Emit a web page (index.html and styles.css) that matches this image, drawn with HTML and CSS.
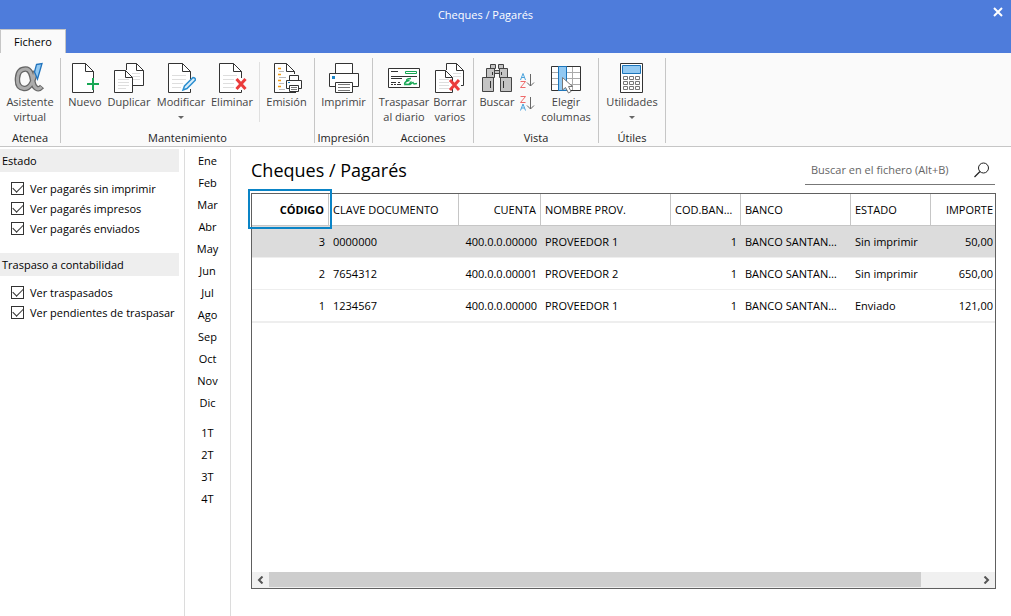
FILE: index.html
```html
<!DOCTYPE html>
<html lang="es">
<head>
<meta charset="utf-8">
<title>Cheques / Pagarés</title>
<link rel="stylesheet" href="styles.css">
</head>
<body>
<header class="titlebar">
  <h1 class="window-title">Cheques / Pagarés</h1>
  <button class="close" aria-label="Cerrar"><svg width="10" height="10" viewBox="0 0 10 10"><path d="M1 1l8 8M9 1l-8 8" stroke="#fff" stroke-width="2" fill="none"/></svg></button>
  <button class="tab">Fichero</button>
</header>

<nav class="ribbon">
  <section class="group g-atenea">
    <div class="tools">
      <button class="tool"><svg width="32" height="32" viewBox="0 0 32 32"><g fill="none"><path id="alpha" d="M21.500 9C20 17 17 27 10 26.500C5 26 3 22 3.500 16C4 10 7 7 11.500 7C17 7 18 14 19 20C20 26 24 29 28 24.500" stroke="#666" stroke-width="5.500"/><path d="M21.500 9C20 17 17 27 10 26.500C5 26 3 22 3.500 16C4 10 7 7 11.500 7C17 7 18 14 19 20C20 26 24 29 27.500 25" stroke="#acacac" stroke-width="3"/></g><path d="M22.500 2.500L28 1.500L23.500 17L20.500 10Z" fill="#92c9f2" stroke="#2274bd" stroke-width="1.300"/></svg><span>Asistente<br>virtual</span></button>
    </div>
    <h2>Atenea</h2>
  </section>

  <section class="group g-mant">
    <div class="tools">
      <button class="tool"><svg width="30" height="32" viewBox="0 0 30 32"><path d="M23.500 19V9.500L15.500 1.500H2.500V30.500H23.500V28" fill="#fff" stroke="#333"/><path d="M15.500 1.500V9.500H23.500Z" fill="#fff" stroke="#333"/><path d="M23 16V28M17 22H29" stroke="#17a754" stroke-width="2"/></svg><span>Nuevo</span></button>
      <button class="tool"><svg width="30" height="32" viewBox="0 0 30 32"><path d="M12.500 8V1.500H22.500L29.500 8.500V23.500H19" fill="#fff" stroke="#333"/><path d="M22.500 1.500V8.500H29.500" fill="none" stroke="#333"/><path d="M18 11.500h8M18 14.500h8M19 17.500h7" stroke="#dedede"/><path d="M.500 8.500H11.500L18.500 15.500V30.500H.500Z" fill="#fff" stroke="#333"/><path d="M11.500 8.500V15.500H18.500" fill="none" stroke="#333"/><path d="M4 17.500h11M4 20.500h11M4 23.500h11M4 26.500h8" stroke="#dedede"/></svg><span>Duplicar</span></button>
      <button class="tool"><svg width="30" height="32" viewBox="0 0 30 32"><path d="M24.500 17V9.500L16.500 1.500H2.500V30.500H24.500V27" fill="#fff" stroke="#333"/><path d="M16.500 1.500V9.500H24.500" fill="none" stroke="#333"/><path d="M6 13.500h14M6 17.500h14M6 21.500h11M6 25.500h9" stroke="#dedede"/><path d="M17 28L18.500 24L27 15.500Q29.500 15.500 29.500 18L21 26.500Z" fill="#d9eefb" stroke="#2c8fd0" stroke-width="1.500"/></svg><span>Modificar</span><i class="arrow"></i></button>
      <button class="tool"><svg width="30" height="32" viewBox="0 0 30 32"><path d="M24.500 16V9.500L16.500 1.500H2.500V30.500H24.500V28" fill="#fff" stroke="#333"/><path d="M16.500 1.500V9.500H24.500" fill="none" stroke="#333"/><path d="M6 13.500h14M6 17.500h11M6 21.500h11M6 25.500h11" stroke="#dedede"/><path d="M19.500 17L28.500 27M28.500 17L19.500 27" stroke="#eb3b3b" stroke-width="3"/></svg><span>Eliminar</span></button>
      <span class="divider"></span>
      <button class="tool"><svg width="30" height="32" viewBox="0 0 30 32"><path d="M22.500 12V9.500L14.500 1.500H2.500V30.500H24" fill="#fff" stroke="#333"/><path d="M14.500 1.500V9.500H22.500" fill="none" stroke="#333"/><path d="M6 6.500h3M6 12.500h3M6 18.500h3M6 24.500h3" stroke="#f39c12" stroke-width="1.500"/><path d="M7 9.500h5M7 15.500h7M7 21.500h5M7 27.500h6" stroke="#bbb"/><path d="M17.500 19V13.500H26.500V19" fill="#fff" stroke="#333"/><path d="M14.500 18.500H29.500V26.500H14.500Z" fill="#fff" stroke="#333"/><path d="M17.500 23.500H26.500V29.500H17.500Z" fill="#fff" stroke="#333"/><path d="M19 25.500h6M19 27.500h6" stroke="#777"/><path d="M16 20.500h2" stroke="#1b86c8"/></svg><span>Emisión</span></button>
    </div>
    <h2>Mantenimiento</h2>
  </section>

  <section class="group g-imp">
    <div class="tools">
      <button class="tool"><svg width="30" height="32" viewBox="0 0 30 32"><path d="M6.500 12V1.500H23.500V12" fill="#fff" stroke="#333"/><path d="M.500 11.500H29.500V24.500H.500Z" fill="#fff" stroke="#333"/><path d="M6.500 20.500H23.500V30.500H6.500Z" fill="#fff" stroke="#333"/><path d="M9 22.500h12M9 25.500h12M9 28.500h12" stroke="#777"/><path d="M3 14h3v3H3z" fill="#1b86c8"/></svg><span>Imprimir</span></button>
    </div>
    <h2>Impresión</h2>
  </section>

  <section class="group g-acc">
    <div class="tools">
      <button class="tool"><svg width="32" height="32" viewBox="0 0 32 32"><path d="M.500 6.500H31.500V25.500H.500Z" fill="#fff" stroke="#333"/><path d="M3 9.500h7M3 14.500h26M3 16.500h11M3 20.500h5M10 20.500h2M3 22.500h2M6 22.500h2M9 22.500h4" stroke="#333"/><path d="M17.500 9.500h11v2h-11z" fill="#fff" stroke="#17a754"/><path d="M23 16.500Q18 16.500 18.500 18.500H21.500Q16.500 19.500 16.500 22L20.500 22.500L23.500 19.500M16 22.500H22L25 20.500L26 22L29 21.500" fill="none" stroke="#17a754" stroke-width="1.300"/></svg><span>Traspasar<br>al diario</span></button>
      <button class="tool"><svg width="30" height="32" viewBox="0 0 30 32"><path d="M11.500 8V1.500H21.500L28.500 8.500V23.500H26" fill="#fff" stroke="#333"/><path d="M21.500 1.500V8.500H28.500" fill="none" stroke="#333"/><path d="M18 11.500h8M18 14.500h8" stroke="#dedede"/><path d="M17.500 19V15.500L10.500 8.500H.500V30.500H17.500V27" fill="#fff" stroke="#333"/><path d="M10.500 8.500V15.500H17.500" fill="none" stroke="#333"/><path d="M4 17.500h10M4 20.500h10M4 23.500h10M4 26.500h10" stroke="#dedede"/><path d="M15 18L24 28M24 18L15 28" stroke="#eb3b3b" stroke-width="3"/></svg><span>Borrar<br>varios</span></button>
    </div>
    <h2>Acciones</h2>
  </section>

  <section class="group g-vista">
    <div class="tools">
      <button class="tool"><svg width="30" height="32" viewBox="0 0 30 32"><path d="M8.500 2.500h5v4h-5zM16.500 2.500h5v4h-5zM4.500 6.500h8v9h-8zM17.500 6.500h8v9h-8zM12.500 8.500h5v3h-5zM.500 15.500h11v14H.500zM18.500 15.500h11v14h-11z" fill="#c4c4c4" stroke="#444"/><path d="M8.500 19v7M21.500 19v7M10.500 10v3M19.500 10v3" stroke="#333"/></svg><span>Buscar</span></button>
      <div class="sorts">
        <button aria-label="Orden ascendente"><svg width="15" height="17" viewBox="0 0 15 17"><path d="M.500 8L3 1.500L5.500 8M1.500 5.500h3" stroke="#4ba3dc" fill="none"/><path d="M.500 9.500h5l-5 6h5" stroke="#ee6a6a" fill="none"/><path d="M10.500 2v12M7 10.500L10.500 14L14 10.500" stroke="#666" fill="none"/></svg></button>
        <button aria-label="Orden descendente"><svg width="15" height="17" viewBox="0 0 15 17"><path d="M.500 1.500h5l-5 6h5" stroke="#ee6a6a" fill="none"/><path d="M.500 15.500L3 9L5.500 15.500M1.500 13h3" stroke="#4ba3dc" fill="none"/><path d="M10.500 2v12M7 10.500L10.500 14L14 10.500" stroke="#666" fill="none"/></svg></button>
      </div>
      <button class="tool"><svg width="30" height="32" viewBox="0 0 30 32"><path d="M.500 4.500h29v24H.500z" fill="#fff" stroke="#333"/><path d="M1 10.500h28M1 16.500h28M1 22.500h28M21.500 5v23" stroke="#aaa"/><path d="M7.500 4.500h8v24h-8z" fill="#92c9f2" stroke="#1b75bb"/><path d="M11.500 15.500V28L14.500 25.500L17.500 31L20 29.500L17.500 24.500H21.500Z" fill="#fff" stroke="#777"/></svg><span>Elegir<br>columnas</span></button>
    </div>
    <h2>Vista</h2>
  </section>

  <section class="group g-utiles">
    <div class="tools">
      <button class="tool"><svg width="24" height="32" viewBox="0 0 24 32"><path d="M.500 1.500h22v29h-22z" fill="#fff" stroke="#333"/><path d="M2.500 3.500h18v8h-18z" fill="#92c9f2" stroke="#1b75bb"/><path d="M3.500 14.500h4v3h-4zM9.500 14.500h4v3h-4zM15.500 14.500h4v3h-4zM3.500 19.500h4v3h-4zM9.500 19.500h4v3h-4zM15.500 19.500h4v3h-4zM3.500 24.500h4v3h-4zM9.500 24.500h4v3h-4zM15.500 24.500h4v3h-4z" fill="#fff" stroke="#777"/></svg><span>Utilidades</span><i class="arrow"></i></button>
    </div>
    <h2>Útiles</h2>
  </section>
</nav>

<div class="body">
  <aside class="filters">
    <h2>Estado</h2>
    <div class="checks">
      <label><input type="checkbox" checked>Ver pagarés sin imprimir</label>
      <label><input type="checkbox" checked>Ver pagarés impresos</label>
      <label><input type="checkbox" checked>Ver pagarés enviados</label>
    </div>
    <h2>Traspaso a contabilidad</h2>
    <div class="checks">
      <label><input type="checkbox" checked>Ver traspasados</label>
      <label><input type="checkbox" checked>Ver pendientes de traspasar</label>
    </div>
  </aside>

  <nav class="periods">
    <div class="period-list">
      <button>Ene</button><button>Feb</button><button>Mar</button><button>Abr</button><button>May</button><button>Jun</button><button>Jul</button><button>Ago</button><button>Sep</button><button>Oct</button><button>Nov</button><button>Dic</button>
    </div>
    <div class="period-list">
      <button>1T</button><button>2T</button><button>3T</button><button>4T</button>
    </div>
  </nav>

  <main class="content">
    <div class="content-head">
      <h2>Cheques / Pagarés</h2>
      <div class="search">
        <input type="text" placeholder="Buscar en el fichero (Alt+B)" aria-label="Buscar en el fichero">
        <button aria-label="Buscar"><svg width="16" height="16" viewBox="0 0 16 16"><circle cx="9.500" cy="6" r="5" fill="none" stroke="#222"/><path d="M6 9.500L.500 15" stroke="#222" stroke-width="1.200"/></svg></button>
      </div>
    </div>
    <div class="grid">
      <table>
        <colgroup><col class="c-cod"><col class="c-doc"><col class="c-cta"><col class="c-nom"><col class="c-cban"><col class="c-ban"><col class="c-est"><col></colgroup>
        <thead>
          <tr><th class="num sorted">CÓDIGO</th><th>CLAVE DOCUMENTO</th><th class="num">CUENTA</th><th>NOMBRE PROV.</th><th>COD.BANCO</th><th>BANCO</th><th>ESTADO</th><th class="num">IMPORTE</th></tr>
        </thead>
        <tbody>
          <tr class="selected"><td class="num">3</td><td>0000000</td><td class="num">400.0.0.00000</td><td>PROVEEDOR 1</td><td class="num">1</td><td class="bank">BANCO SANTANDER</td><td>Sin imprimir</td><td class="num">50,00</td></tr>
          <tr><td class="num">2</td><td>7654312</td><td class="num">400.0.0.00001</td><td>PROVEEDOR 2</td><td class="num">1</td><td class="bank">BANCO SANTANDER</td><td>Sin imprimir</td><td class="num">650,00</td></tr>
          <tr><td class="num">1</td><td>1234567</td><td class="num">400.0.0.00000</td><td>PROVEEDOR 1</td><td class="num">1</td><td class="bank">BANCO SANTANDER</td><td>Enviado</td><td class="num">121,00</td></tr>
        </tbody>
      </table>
      <div class="scrollbar">
        <button aria-label="Desplazar a la izquierda"><svg width="7" height="8" viewBox="0 0 7 8"><path d="M5.500 .500L2 4L5.500 7.500" fill="none" stroke="#555" stroke-width="2"/></svg></button>
        <div class="track"><div class="thumb"></div></div>
        <button aria-label="Desplazar a la derecha"><svg width="7" height="8" viewBox="0 0 7 8"><path d="M1.500 .500L5 4L1.500 7.500" fill="none" stroke="#555" stroke-width="2"/></svg></button>
      </div>
    </div>
  </main>
</div>
</body>
</html>
```
FILE: styles.css
```css
* { box-sizing: border-box; }

body {
  margin: 0;
  min-height: 100vh;
  display: flex;
  flex-direction: column;
  background: #fff;
  color: #000;
  font: 11px/15px "Segoe UI", "Open Sans", sans-serif;
}

h1, h2 { margin: 0; font: inherit; }

button {
  padding: 0;
  border: 0;
  background: none;
  color: inherit;
  font: inherit;
}

svg { display: block; }

.titlebar {
  display: grid;
  grid-template: 29px 24px / 66px 1fr 26px;
  background: #4e7cdb;
  color: #fff;
}

.window-title {
  grid-area: 1 / 1 / 2 / 4;
  justify-self: center;
  padding: 7px 40px 0 0;
}

.close { grid-area: 1 / 3; display: grid; place-items: center; padding-bottom: 6px; }

.tab {
  grid-area: 2 / 1;
  background: #fafafa;
  color: #000;
  border: solid #c6c6c6;
  border-width: 1px 1px 0;
}

.ribbon {
  display: flex;
  height: 94px;
  padding: 5px 0 3px;
  background: #fafafa;
  border-bottom: 1px solid #c6c6c6;
}

.group {
  display: flex;
  flex-direction: column;
  border-right: 1px solid #c6c6c6;
}

.group h2 { margin-top: auto; text-align: center; line-height: 11px; color: #222; }

.tools { display: grid; justify-content: center; align-items: start; padding-top: 4px; color: #444; }

.tool {
  display: flex;
  flex-direction: column;
  align-items: center;
  white-space: nowrap;
}

.arrow {
  margin-top: 7px;
  border: 3px solid transparent;
  border-top-color: #666;
  border-bottom: 0;
}

.divider { width: 1px; height: 60px; background: #e0e0e0; justify-self: end; }

.g-atenea { width: 61px; }
.g-mant { width: 254px; }
.g-mant .tools { grid-template-columns: 42px 46px 58px 44px 6px 53px; padding-left: 2px; }
.g-imp { width: 58px; }
.g-acc { width: 101px; }
.g-acc .tools { grid-template-columns: 54px 38px; }
.g-vista { width: 125px; }
.g-vista .tools { grid-template-columns: 42px 19px 58px; padding-right: 1px; }
.g-utiles { width: 67px; }

.sorts { display: grid; gap: 6px; padding: 10px 0 0 2px; }

.body { flex: 1; display: flex; padding-top: 2px; }

.filters { width: 184px; padding-right: 5px; }
.filters h2 { padding: 4px 2px; background: #eee; }

.checks { display: grid; padding: 6px 10px 15px; }
.checks label { display: flex; align-items: center; gap: 6px; height: 20px; white-space: nowrap; }

.checks input {
  appearance: none;
  width: 13px;
  height: 13px;
  margin: 0 0 0 1px;
  border: 1px solid #333;
  background: #fff;
  display: grid;
  place-items: center;
}

.checks input:checked::before {
  content: "";
  width: 9px;
  height: 5px;
  margin-bottom: 3px;
  border: solid #333;
  border-width: 0 0 1px 1px;
  transform: rotate(-45deg);
}

.periods {
  width: 47px;
  display: flex;
  flex-direction: column;
  gap: 8px;
  border: solid #dcdcdc;
  border-width: 0 1px;
}

.period-list { display: grid; grid-auto-rows: 22px; }

.content { flex: 1; min-width: 0; display: flex; flex-direction: column; padding: 7px 15px 27px 20px; }

.content-head { display: flex; justify-content: space-between; align-items: flex-start; height: 37px; }
.content-head h2 { font-size: 18px; line-height: 28px; }

.search { display: flex; align-items: center; width: 190px; height: 29px; margin-right: 1px; border-bottom: 1px solid #777; }
.search input { flex: 1; min-width: 0; padding: 0 6px 2px; border: 0; outline: 0; background: none; font: inherit; }
.search input::placeholder { color: #666; opacity: 1; }
.search button { margin-right: 5px; }

.grid { flex: 1; display: flex; flex-direction: column; border: 1px solid #606060; }

table { width: 100%; table-layout: fixed; border-collapse: separate; border-spacing: 0; }

th, td {
  height: 32px;
  padding: 0 4px;
  overflow: hidden;
  text-align: left;
  text-overflow: ellipsis;
  white-space: nowrap;
  font-weight: 400;
  border-bottom: 1px solid #eee;
}

th { border-right: 1px solid #c6c6c6; border-bottom-color: #c6c6c6; }
.num { text-align: right; }
td.bank { padding-right: 8px; }
th:last-child { border-right: 0; }
th:last-child, td:last-child { padding-right: 2px; }
tbody tr:last-child td { border-bottom-width: 2px; height: 33px; }
.selected td { background: #dcdcdc; }

.sorted { position: relative; overflow: visible; font-weight: 700; }
.sorted::after { content: ""; position: absolute; inset: -5px -4px -4px; border: 2px solid #0a84c6; }

.c-cod { width: 77px; }
.c-doc, .c-nom { width: 130px; }
.c-cta { width: 82px; }
.c-cban { width: 70px; }
.c-ban { width: 110px; }
.c-est { width: 80px; }

.scrollbar { display: flex; height: 16px; margin-top: auto; background: #f0f0f0; }
.scrollbar button { width: 17px; display: grid; place-items: center; }
.track { flex: 1; }
.thumb { width: 92%; height: 15px; background: #cdcdcd; }
```
